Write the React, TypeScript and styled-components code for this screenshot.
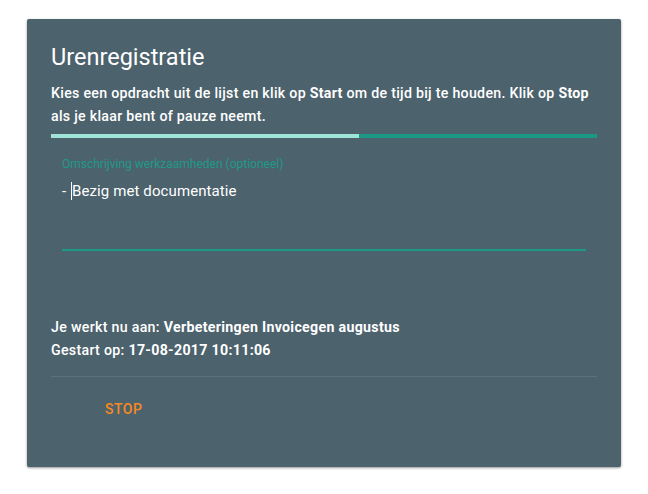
import styled, { createGlobalStyle } from 'styled-components'

const GlobalStyle = createGlobalStyle`
  html, body {
    margin: 0;
    padding: 0;
    background: #ffffff;
    font-family: Roboto, "Liberation Sans", sans-serif;
  }
`

const Page = styled.div`
  padding: 19px 27px 27px 27px;
`

const Card = styled.div`
  width: 594px;
  height: 448px;
  box-sizing: border-box;
  background: #4c626d;
  color: #ffffff;
  border-radius: 2px;
  box-shadow: 0 1px 3px rgba(0, 0, 0, 0.25), 0 1px 2px rgba(0, 0, 0, 0.2);
  padding: 22px 24px 0 24px;
  display: flex;
  flex-direction: column;
`

const Title = styled.h2`
  margin: 0;
  font-size: 23.5px;
  font-weight: 400;
  line-height: 32px;
`

const Intro = styled.p`
  margin: 9px 0 0 0;
  font-size: 14.2px;
  font-weight: 500;
  letter-spacing: 0.28px;
  line-height: 23px;

  b {
    font-weight: 700;
  }
`

const Progress = styled.div`
  margin-top: 6px;
  height: 4px;
  background: #1b9985;
  display: flex;
`

const ProgressFill = styled.div`
  height: 100%;
  background: #9fe3d9;
`

const Field = styled.div`
  margin: 18px 11px 0 11px;
  border-bottom: 2px solid #1b9985;
  height: 93px;
  display: flex;
  flex-direction: column;
`

const FieldLabel = styled.label`
  font-size: 12px;
  line-height: 16px;
  color: #1f9a87;
`

const FieldValue = styled.div`
  margin-top: 9px;
  font-size: 15px;
  font-weight: 400;
  letter-spacing: 0.1px;
  line-height: 20px;
  color: #ffffff;
  display: flex;
  align-items: center;
`

const Caret = styled.span`
  display: inline-block;
  width: 1px;
  height: 18px;
  background: #ffffff;
  margin: 0 0 0 1px;
`

const Info = styled.div`
  margin-top: 65px;
  font-size: 14.2px;
  font-weight: 500;
  letter-spacing: 0.3px;
  line-height: 23px;

  b {
    font-weight: 700;
  }
`

const Divider = styled.hr`
  margin: 14px 0 0 0;
  border: none;
  height: 1px;
  background: #5b717c;
`

const Actions = styled.div`
  display: flex;
  padding: 24px 0 0 54px;
`

const ActionButton = styled.button<{ $tone: string }>`
  background: none;
  border: none;
  padding: 0;
  font-family: Roboto, "Liberation Sans", sans-serif;
  font-size: 14px;
  font-weight: 500;
  letter-spacing: 0.5px;
  text-transform: uppercase;
  color: ${({ $tone }) => $tone};
  cursor: pointer;
`

export default function App() {
  const progress = 56.4

  return (
    <>
      <GlobalStyle />
      <Page>
        <Card>
          <Title>Urenregistratie</Title>
          <Intro>
            Kies een opdracht uit de lijst en klik op <b>Start</b> om de tijd bij te houden. Klik op <b>Stop</b> als je klaar bent of pauze neemt.
          </Intro>
          <Progress>
            <ProgressFill style={{ width: `${progress}%` }} />
          </Progress>
          <Field>
            <FieldLabel>Omschrijving werkzaamheden (optioneel)</FieldLabel>
            <FieldValue>
              -&nbsp;<Caret />Bezig met documentatie
            </FieldValue>
          </Field>
          <Info>
            Je werkt nu aan: <b>Verbeteringen Invoicegen augustus</b>
            <br />
            Gestart op: <b>17-08-2017 10:11:06</b>
          </Info>
          <Divider />
          <Actions>
            <ActionButton $tone="#f68a1f">Stop</ActionButton>
          </Actions>
        </Card>
      </Page>
    </>
  )
}
